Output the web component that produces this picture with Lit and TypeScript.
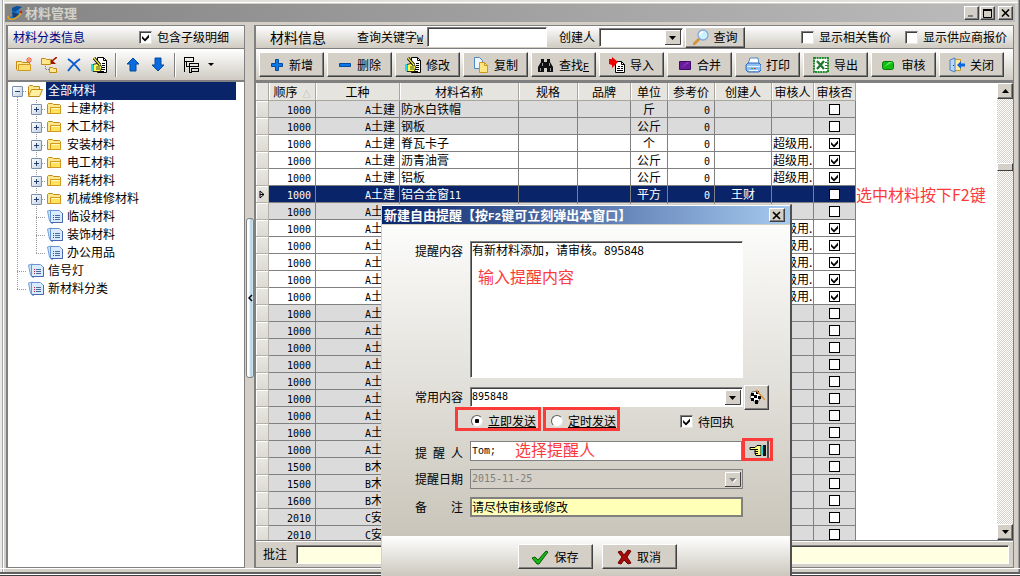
import { LitElement, html, css, svg, TemplateResult } from "lit";
import { customElement } from "lit/decorators.js";
import { classMap } from "lit/directives/class-map.js";

type Row = {
  order: string; trade: string; name: string; unit: string;
  price: string; creator: string; auditor: string; checked: boolean; state: "off" | "on" | "selected";
};

const pending = (order: string, trade: string, name = "", unit = ""): Row =>
  ({ order, trade, name, unit, price: "0", creator: "", auditor: "", checked: false, state: "off" });
const audited = (name = "", unit = ""): Row =>
  ({ order: "1000", trade: "A土建", name, unit, price: "0", creator: "", auditor: "超级用.", checked: true, state: "on" });

const ROWS: Row[] = [
  pending("1000", "A土建", "防水白铁帽", "斤"),
  pending("1000", "A土建", "钢板", "公斤"),
  audited("脊瓦卡子", "个"),
  audited("沥青油膏", "公斤"),
  audited("铝板", "公斤"),
  { order: "1000", trade: "A土建", name: "铝合金窗11", unit: "平方", price: "0", creator: "王财", auditor: "", checked: false, state: "selected" },
  pending("1000", "A土建"),
  ...Array.from({ length: 5 }, () => audited()),
  ...Array.from({ length: 9 }, () => pending("1000", "A土建")),
  pending("1500", "B木工"),
  pending("1500", "B木工"),
  pending("1600", "B木工"),
  pending("2010", "C安装"),
  pending("2010", "C安装"),
];

const FOLDERS = ["土建材料", "木工材料", "安装材料", "电工材料", "消耗材料", "机械维修材料"];
const DOCS = ["临设材料", "装饰材料", "办公用品"];
const ROOT_DOCS = ["信号灯", "新材料分类"];

const pic = (body: TemplateResult | unknown, w = 16, h = 16) =>
  html`<svg class="pic" width=${w} height=${h} viewBox="0 0 ${w} ${h}" aria-hidden="true">${body}</svg>`;

const ICON = {
  logo: pic(svg`<path d="M5 3 10 1l5 1-3 2 1 4-2 4-5 2-4-1 4-3-1-3z" fill="#1c7ed0"/><path d="M10 1l5 1-3 2-4 3-3-1 0-3z" fill="#0d4f9a"/><path d="M5 7l4 1 3 1-3 3-3 1z" fill="#1a3f74"/><path d="M1 11q0 4 5 3 5-1 8-6" fill="none" stroke="#e0a020" stroke-width="1.6"/><circle cx="14" cy="7" r="1.2" fill="#d02010"/>`),
  newFolder: pic(svg`<path d="M.500 4.500h5l1 1h7v8h-12l-1-1z" fill="#ffe88c" stroke="#c48a18"/><path d="M2.500 7.500h12v6h-12z" fill="#ffe070" stroke="#d29a22"/><path d="M13 0v6M10 3h6M11 1l4 4M15 1l-4 4" stroke="#f04020" stroke-width=".9"/><circle cx="13" cy="3" r="1.100" fill="#ffb060"/>`),
  moveFolder: pic(svg`<path d="M.500 1.500h4l1 1h4v5h-9z" fill="#ffe88c" stroke="#c48a18"/><path d="M8.500 10.500h3l1 1h3v4h-7z" fill="#ffe88c" stroke="#c48a18"/><path d="M16 0l-5 4" stroke="#a01000" stroke-width="1.600"/><path d="M10 2v5h5z" fill="#a01000"/><path d="M4.500 9v3.500H8" stroke="#777" stroke-dasharray="1 1" fill="none"/>`),
  cross: pic(svg`<path d="M2 2q6 4 12 12M14 2Q8 6 2 14" fill="none" stroke="#0a5bd0" stroke-width="1.900"/>`),
  edit: pic(svg`<path d="M6.500 .500h6l3 3v12h-9z" fill="#fff" stroke="#000"/><path d="M12.500 .500v3h3M10 12.500h4M8 14.500h5M11 6.500h3M11 8.500h3M11 10.500h3" fill="none" stroke="#000"/><path d="M2 7.500l4-1 4 2 .500 2-1 4H2z" fill="#ffff50" stroke="#000" stroke-width=".8"/><path d="M5 10h4M5 12h4" stroke="#000" stroke-width=".7"/><path d="M0 7h2v7H0z" fill="#20d8e8"/><path d="M3 1l6 7" stroke="#000" stroke-width="3"/><path d="M3 1l6 7" stroke="#f8e840" stroke-width="1.200"/>`),
  up: pic(svg`<path d="M8 1l6 6h-3v7H5V7H2z" fill="#0a6be0" stroke="#044a9c"/>`),
  down: pic(svg`<path d="M8 14l6-6h-3V1H5v7H2z" fill="#0a6be0" stroke="#044a9c"/>`),
  struct: pic(svg`<path d="M.500 .500h9v4h-9zM5.500 6.500h9v3h-9zM7.500 11.500h7v3h-7zM.500 4v11M2.500 4v5h3M5.500 9v6h2" fill="none" stroke="#000" shape-rendering="crispEdges"/>`),
  plus: pic(svg`<path d="M5.500 2.500h3v4h4v3h-4v4h-3v-4h-4v-3h4z" fill="#0a78e8" stroke="#06489c"/>`, 14, 16),
  minus: pic(svg`<path d="M1.500 6.500h11v3h-11z" fill="#0a78e8" stroke="#06489c"/>`, 14, 16),
  copy: pic(svg`<path d="M1.500 .500h5l3 3v8h-8z" fill="#eef6ff" stroke="#4f86c6"/><path d="M6.500 5.500h5l3 3v7h-8z" fill="#ffe680" stroke="#c99a20"/><path d="M11.500 5.500v3h3" fill="none" stroke="#c99a20"/>`),
  find: pic(svg`<path d="M3 2h3v3h3V2h3v3l3 5v5H9v-4H6v4H0v-5l3-5z" fill="#111"/><path d="M4.500 6v3M11.500 6v3M2.500 11v3M12.500 11v3" stroke="#999"/>`),
  import: pic(svg`<path d="M6.500 4.500h6l3 3v8h-9z" fill="#fff" stroke="#000"/><path d="M12.500 4.500v3h3" fill="none" stroke="#000"/><path d="M9 9.500h2M12 9.500h2M8 11.500h3M12 11.500h2M8 13.500h6" stroke="#000"/><path d="M0 2h3V0l6 5-6 6V8L0 7z" fill="#f00000"/>`),
  merge: pic(svg`<path d="M1.500 4.500h11v8h-11z" fill="#6a1b9a" stroke="#3d0b66"/><path d="M3 11l6-6h3z" fill="#8f3fc0"/>`, 14, 16),
  print: pic(svg`<path d="M5 1h8l1 6H3z" fill="#fff" stroke="#4f86c6"/><path d="M1 8l2-2h11l2 2v5l-2 2H3l-2-2z" fill="#8fc0f4" stroke="#2e68b8"/><path d="M2 9.500h13" stroke="#e6f3ff"/><path d="M6 11.500h2" stroke="#28b428"/><path d="M9 11.500h2" stroke="#e03030"/><path d="M4 13.500h9" stroke="#fff"/>`),
  excel: pic(svg`<rect x="1" y="1" width="14" height="14" fill="#fff" stroke="#1e8a2c" stroke-width="2" stroke-dasharray="2 .600"/><path d="M4 4l7 8M11 4l-7 8" stroke="#1e7a2c" stroke-width="2.300"/><path d="M12 5.500h2M12 8.500h2M12 11.500h2" stroke="#1e7a2c"/>`),
  audit: pic(svg`<rect x="1.500" y="4.500" width="11" height="8" rx="2" fill="#10c010" stroke="#087808"/><path d="M3 10l5-5h4z" fill="#60e860"/>`, 15, 16),
  exit: pic(svg`<path d="M5.500 2.500h6v11h-6z" fill="#ffe9a8" stroke="#c89a28"/><path d="M1 3l5-2v14l-5-2z" fill="#b8d8fa" stroke="#4a7ec0"/><path d="M4 8.500h1" stroke="#204080"/><path d="M8 8l4-4v2.500h4v3h-4V12z" fill="#0a66e0"/>`),
  lens: pic(svg`<path d="M1 15l6-6" stroke="#d8943a" stroke-width="3" stroke-linecap="round"/><circle cx="10" cy="6" r="5" fill="#c8f2fc" stroke="#86a8d8" stroke-width="1.300"/><path d="M7 6q0-3 3-3" fill="none" stroke="#fff" stroke-width="1.500"/>`),
  folder: pic(svg`<path d="M.500 12.500v-9l1-1h4l1 1h6l1 1v8z" fill="#ffe88c" stroke="#c48a18"/><path d="M3.500 6.500h10v6h-10z" fill="#ffe35c" stroke="#d29a22"/><path d="M4.500 7.500h8" stroke="#fff6c0"/>`),
  folderOpen: pic(svg`<path d="M.500 12.500v-9l1-1h3l1 1h6v3" fill="#ffe88c" stroke="#c48a18"/><path d="M.500 13.500l3-7h11l-3 7z" fill="#fff0a0" stroke="#c48a18"/>`),
  doc: pic(svg`<path d="M.500 2l4-1v11l1 3-3-3z" fill="#cfe4fb" stroke="#6f9fda"/><path d="M3.500 1.500h9l3 3v9h-12z" fill="#d9ebff" stroke="#6a94d8"/><path d="M15.500 4v9.500H4" fill="none" stroke="#4b67b0"/><path d="M6 6.500h1M6 8.500h1M6 10.500h1" stroke="#c02020"/><path d="M8 6.500h5M8 8.500h5M8 10.500h5" stroke="#4a6a9c"/>`),
  flag: pic(svg`<path d="M3 3l6-1 3 6-4 7-7-6z" fill="#fff" stroke="#000" stroke-width=".500"/><path d="M2 4h3v3H2zM7 2h3v3H7zM5 6h3v3H5zM9 7h3v3H9zM2 9h3v3H2zM6 11h3v4H6z" fill="#000"/><path d="M7 1l9 10" stroke="#d8943a" stroke-width="1.500"/>`),
  hand: pic(svg`<path d="M1 5.500h5l2-2h4v10H7l-1-2V7.500H1z" fill="#ffff80" stroke="#000"/><path d="M6 7.500h3M6 9.500h3M6 11.500h3" stroke="#000"/><path d="M12 4h2v9h-2z" fill="#20d0e0"/><path d="M14 3h3v11h-3z" fill="#111"/>`, 17, 16),
  save: pic(svg`<path d="M1 9l3-1 3 3 8-9 2 1L8 15H6z" fill="#18b418" stroke="#075c07"/>`, 18, 16),
  cancel: pic(svg`<path d="M1 3l3-1 3 4 4-5 3 1-4 6 4 6-3 1-4-4-3 4-3-1 4-6z" fill="#a80808" stroke="#6a0000"/>`, 15, 16),
};

/** Half-width characters get the narrow fixed-pitch face. */
const mix = (text: string) =>
  text.split(/([\x21-\x7e]+)/).map((p) => (/^[\x21-\x7e]/.test(p) ? html`<span class="half">${p}</span>` : p));

const TOOLS: [unknown, string, string][] = [
  [ICON.plus, "新增", ""], [ICON.minus, "删除", ""], [ICON.edit, "修改", ""], [ICON.copy, "复制", ""],
  [ICON.find, "查找", "F"], [ICON.import, "导入", ""], [ICON.merge, "合并", ""], [ICON.print, "打印", ""],
  [ICON.excel, "导出", ""], [ICON.audit, "审核", ""], [ICON.exit, "关闭", ""],
];

const shared = css`
  :host { box-sizing: border-box; font: 12px/16px "Noto Sans CJK SC", sans-serif; color: #000; }
  * { box-sizing: border-box; }
  button, input, select, textarea { font: inherit; color: inherit; margin: 0; border-radius: 0; }
  .pic { display: block; flex: none; }
  .half { font: 10px/0 "DejaVu Sans Mono", monospace; }
  .key { font: 10px/0 "Liberation Mono", monospace; text-decoration: underline; }
  .btn {
    display: flex; align-items: center; justify-content: center; gap: 5px; padding: 0; white-space: nowrap;
    background: #d4d0c8; border: 1px solid; border-color: #fff #404040 #404040 #fff;
    box-shadow: inset -1px -1px #808080;
  }
  .sunken { border: 1px solid; border-color: #808080 #fff #fff #808080; box-shadow: inset 1px 1px #404040; background: #fff; outline: 0; }
  .tick { display: flex; align-items: center; gap: 5px; white-space: nowrap; }
  .box {
    appearance: none; flex: none; width: 13px; height: 13px; background: #fff center / 9px 9px no-repeat;
    border: 1px solid; border-color: #808080 #e8e6e0 #e8e6e0 #808080; box-shadow: inset 1px 1px #404040;
  }
  .box:checked { background-image: url("data:image/svg+xml,%3Csvg xmlns='http://www.w3.org/2000/svg' viewBox='0 0 9 9'%3E%3Cpath d='M1 3l3 3 4-4.500v3L4 8.500 1 5.500z'/%3E%3C/svg%3E"); }
  .drop {
    appearance: none; padding: 0 18px 0 1px;
    background-image: url("data:image/svg+xml,%3Csvg xmlns='http://www.w3.org/2000/svg' width='16' height='15'%3E%3Cpath fill='%23d4d0c8' d='M0 0h16v15H0z'/%3E%3Cpath d='M.5 14V.5H15' fill='none' stroke='%23fff'/%3E%3Cpath d='M0 14.500h15.500V0' fill='none' stroke='%23404040'/%3E%3Cpath d='M4 6h7l-3.500 4z'/%3E%3C/svg%3E");
    background-repeat: no-repeat; background-position: right 1px center;
  }
`;

@customElement("reminder-dialog")
export class ReminderDialog extends LitElement {
  static styles = [shared, css`
    :host { display: block; background: #d4d0c8; border: 1px solid #d4d0c8; border-right: 2px solid #505050; box-shadow: inset 0 1px #fff; padding-top: 1px; }
    .title { display: flex; align-items: center; height: 19px; padding: 0 5px 0 2px; color: #fff; font-size: 13px; font-weight: 700; background: linear-gradient(90deg, #0a246a, #a6caf0); border-bottom: 1px solid #d4d0c8; }
    .title .half { font: 700 11px/0 "Liberation Mono", monospace; }
    .caption { flex: 1; white-space: nowrap; }
    .x { width: 16px; height: 14px; }
    .body { padding: 16px 17px 19px 33px; background: linear-gradient(#fcfcfb, #c9c5ba); }
    .line { display: flex; align-items: center; gap: 7px; height: 20px; margin-top: 8px; }
    .label { display: flex; justify-content: space-between; width: 48px; flex: none; }
    .field { width: 273px; height: 20px; padding: 0 1px; }
    .top { align-items: flex-start; height: 137px; margin: 0; }
    .top .label { padding-top: 2px; }
    .memo { width: 273px; height: 137px; resize: none; padding: 0 1px; line-height: 16px; display: block; }
    .common { height: 24px; margin-top: 7px; }
    .common .btn { width: 25px; height: 25px; margin-left: -6px; }
    .common .field { font: 10px/16px "DejaVu Sans Mono", monospace; }
    .modes { display: flex; align-items: center; gap: 2px; height: 24px; margin: -2px 0 0 40px; }
    .mode { display: flex; align-items: center; justify-content: flex-end; gap: 5px; height: 24px; padding: 4px 1px 0 0; border: 3px solid #fb3a3a; white-space: nowrap; text-decoration: underline; }
    .wide { width: 86px; padding-right: 2px; }
    .narrow { width: 77px; }
    .radio { appearance: none; width: 12px; height: 12px; margin: 0; border-radius: 50%; background: #fff; border: 1px solid; border-color: #606060 #e8e8e8 #e8e8e8 #606060; }
    .radio:checked { background: radial-gradient(circle, #000 2px, #fff 2.5px); }
    .modes .tick { margin: 5px 0 0 58px; }
    .people { height: 23px; margin-top: 7px; align-items: flex-end; }
    .people .field { width: 272px; border-color: #808080; box-shadow: none; font: 10px/16px "Liberation Mono", monospace; }
    .pick { width: 31px; height: 23px; margin-left: -7px; border: 3px solid #fb3a3a; box-shadow: inset -1px 0 #d4d0c8, inset -3px 0 #505050; }
    .date { background-color: #d4d0c8; color: #808080; border-color: #808080; box-shadow: none; opacity: 1; font: 10px/16px "DejaVu Sans Mono", monospace;
      background-image: url("data:image/svg+xml,%3Csvg xmlns='http://www.w3.org/2000/svg' width='16' height='15'%3E%3Cpath d='M.5 14V.5H15' fill='none' stroke='%23fff'/%3E%3Cpath d='M0 14.500h15.500V0' fill='none' stroke='%23404040'/%3E%3Cpath fill='%23fff' d='M5 7h7l-3.500 4z'/%3E%3Cpath fill='%23808080' d='M4 6h7l-3.500 4z'/%3E%3C/svg%3E"); }
    .remark { background: #ffffb8; border: 2px solid #808080; box-shadow: none; padding: 0 0 2px; }
    .foot { display: flex; justify-content: center; gap: 9px; height: 42px; padding: 8px 0 0 22px; background: linear-gradient(#fff, #c9c5ba); }
    .foot .btn { width: 75px; height: 25px; }
  `];

  render() {
    return html`
      <div class="title"><span class="caption">${mix("新建自由提醒【按F2键可立刻弹出本窗口】")}</span>
        <button class="btn x" aria-label="关闭"><svg width="10" height="9" viewBox="0 0 10 9"><path d="M1 1l7 7M8 1L1 8" stroke="#000" stroke-width="1.700"/></svg></button>
      </div>
      <div class="body">
        <div class="line top"><label class="label" for="memo">提醒内容</label><textarea id="memo" class="sunken memo" .value=${"有新材料添加，请审核。895848"}></textarea></div>
        <div class="line common"><label class="label" for="common">常用内容</label><select id="common" class="sunken field drop"><option>895848</option></select><button class="btn" aria-label="维护常用内容">${ICON.flag}</button></div>
        <div class="modes">
          <label class="mode wide"><input class="radio" type="radio" name="mode" checked>立即发送</label>
          <label class="mode narrow"><input class="radio" type="radio" name="mode">定时发送</label>
          <label class="tick"><input class="box" type="checkbox" checked>待回执</label>
        </div>
        <div class="line people"><label class="label" for="people"><span>提</span><span>醒</span><span>人</span></label><input id="people" class="sunken field" value="Tom;"><button class="btn pick" aria-label="选择提醒人">${ICON.hand}</button></div>
        <div class="line"><label class="label" for="date">提醒日期</label><select id="date" class="sunken field drop date" disabled><option>2015-11-25</option></select></div>
        <div class="line"><label class="label" for="remark"><span>备</span><span>注</span></label><input id="remark" class="sunken field remark" value="请尽快审核或修改"></div>
      </div>
      <div class="foot"><button class="btn">${ICON.save}保存</button><button class="btn">${ICON.cancel}取消</button></div>`;
  }
}

@customElement("category-tree")
export class CategoryTree extends LitElement {
  static styles = [shared, css`
    :host { display: block; padding: 0 8px 0 0; }
    .node { display: flex; align-items: center; height: 18px; white-space: nowrap; }
    .guide { position: relative; flex: none; width: 19px; height: 18px; display: flex; align-items: center; justify-content: center;
      --v: repeating-linear-gradient(#999 0 1px, transparent 1px 2px); --h: repeating-linear-gradient(90deg, #999 0 1px, transparent 1px 2px); }
    .through { background: var(--v) 9px 0 / 1px 100% no-repeat; }
    .branch { background: var(--v) 9px 0 / 1px 100% no-repeat, var(--h) 9px 9px / 10px 1px no-repeat; }
    .end { background: var(--v) 9px 0 / 1px 9px no-repeat, var(--h) 9px 9px / 10px 1px no-repeat; }
    .start { background: var(--v) 9px 9px / 1px 9px no-repeat, var(--h) 9px 9px / 10px 1px no-repeat; }
    .fold { width: 11px; height: 11px; padding: 0; border: 1px solid #7a8fae; border-radius: 1px; background: linear-gradient(135deg, #fff, #c4d0e2); display: flex; }
    .text { padding: 0 2px 2px; line-height: 16px; }
    .current { flex: 1; background: #0a246a; color: #fff; }
    .slot { width: 19px; flex: none; padding-left: 1px; }
  `];

  private fold(open: boolean) {
    return html`<button class="fold" aria-label=${open ? "折叠" : "展开"}><svg width="9" height="9" viewBox="0 0 9 9"><path d=${open ? "M2 4.500h5" : "M2 4.500h5M4.500 2v5"} stroke="#24406c"/></svg></button>`;
  }

  render() {
    return html`
      <div class="node"><span class="guide start">${this.fold(true)}</span><span class="slot">${ICON.folderOpen}</span><span class="text current">全部材料</span></div>
      ${FOLDERS.map((t) => html`<div class="node"><span class="guide through"></span><span class="guide branch">${this.fold(false)}</span><span class="slot">${ICON.folder}</span><span class="text">${t}</span></div>`)}
      ${DOCS.map((t, i) => html`<div class="node"><span class="guide through"></span><span class=${classMap({ guide: true, branch: i < DOCS.length - 1, end: i === DOCS.length - 1 })}></span><span class="slot">${ICON.doc}</span><span class="text">${t}</span></div>`)}
      ${ROOT_DOCS.map((t, i) => html`<div class="node"><span class=${classMap({ guide: true, branch: i === 0, end: i === 1 })}></span><span class="slot">${ICON.doc}</span><span class="text">${t}</span></div>`)}`;
  }
}

@customElement("material-grid")
export class MaterialGrid extends LitElement {
  static styles = [shared, css`
    :host { display: flex; align-items: flex-start; overflow: hidden; background: #fff; }
    .rows { border-collapse: separate; border-spacing: 0; table-layout: fixed; width: 600px; flex: none; }
    .c13 { width: 13px; } .c47 { width: 47px; } .c84 { width: 84px; } .c119 { width: 119px; } .c59 { width: 59px; }
    .c53 { width: 53px; } .c37 { width: 37px; } .c57 { width: 57px; } .c42 { width: 42px; }
    th { height: 18px; padding: 0; font-weight: 400; line-height: 17px; white-space: nowrap; background: #e6e4de; border-bottom: 1px solid #a8a69f; border-right: 1px solid #a8a69f; box-shadow: inset 1px 0 #fff; }
    td { height: 17px; padding: 0; line-height: 16px; white-space: nowrap; overflow: hidden; border: solid #808080; border-width: 0 1px 1px 0; background: #dbdbdb; }
    .on td { background: #fff; }
    .selected td { background: #0a246a; color: #fff; }
    .rows .mark { background: linear-gradient(#e9e7e2, #dddad3); border-color: #b4b1a9; box-shadow: inset 1px 1px #fff; color: #000; }
    .mark svg { display: block; margin: auto; }
    .right { text-align: right; padding-right: 4px; }
    .mid { text-align: center; }
    .name, .auditor { padding-left: 1px; }
    .flag { appearance: none; display: block; width: 11px; height: 11px; margin: 0 auto; border: 1px solid #000; background: #fff center / 9px 9px no-repeat; }
    .flag:checked { background-image: url("data:image/svg+xml,%3Csvg xmlns='http://www.w3.org/2000/svg' viewBox='0 0 9 9'%3E%3Cpath d='M1 3l3 3 4-4.500v3L4 8.500 1 5.500z'/%3E%3C/svg%3E"); }
    .sort { color: #aaa; font-size: 8px; line-height: 0; padding-left: 5px; }
    .bar { margin-left: auto; width: 16px; align-self: stretch; display: flex; flex-direction: column; background: repeating-conic-gradient(#d4d0c8 0 25%, #fff 0 50%) 0 0 / 2px 2px; }
    .bar .btn { width: 16px; height: 16px; flex: none; }
    .track { flex: 1; padding-top: 64px; }
    .thumb { height: 8px; background: #d4d0c8; border: 1px solid; border-color: #fff #404040 #404040 #fff; }
  `];

  render() {
    return html`
      <table class="rows">
        <colgroup>${[13, 47, 84, 119, 59, 53, 37, 47, 57, 42, 42].map((w) => html`<col class="c${w}">`)}</colgroup>
        <thead><tr><th></th><th>顺序<span class="sort">△</span></th>${["工种", "材料名称", "规格", "品牌", "单位", "参考价", "创建人", "审核人", "审核否"].map((t) => html`<th>${t}</th>`)}</tr></thead>
        <tbody>${ROWS.map((r) => html`
          <tr class=${r.state}>
            <td class="mark">${r.state === "selected" ? html`<svg width="7" height="9" viewBox="0 0 7 9"><path d="M1 1l4 3.500L1 8zM1 4.500h4" fill="none" stroke="#000"/></svg>` : ""}</td>
            <td class="right">${mix(r.order)}</td><td class="right">${mix(r.trade)}</td><td class="name">${mix(r.name)}</td>
            <td></td><td></td><td class="mid">${r.unit}</td><td class="right">${mix(r.price)}</td>
            <td class="mid">${r.creator}</td><td class="auditor">${r.auditor}</td>
            <td><input class="flag" type="checkbox" aria-label="审核否" .checked=${r.checked}></td>
          </tr>`)}</tbody>
      </table>
      <div class="bar">
        <button class="btn" aria-label="向上"><svg width="7" height="4"><path d="M0 4L3.500 0 7 4z"/></svg></button>
        <div class="track"><div class="thumb"></div></div>
        <button class="btn" aria-label="向下"><svg width="7" height="4"><path d="M0 0h7L3.500 4z"/></svg></button>
      </div>`;
  }
}

@customElement("app-root")
export class AppRoot extends LitElement {
  static styles = [shared, css`
    :host { display: flex; flex-direction: column; position: relative; height: 100vh; overflow: hidden; padding: 4px 5px 0; background: #d4d0c8; box-shadow: inset 2px 0 #e6eaea, inset 3px 0 #a8a8a8, inset 4px 0 #fff, inset -1px 0 #606060, inset -2px 0 #a0a0a0, inset 0 2px #e2e0da, inset 0 3px #fff; }
    .title { display: flex; align-items: center; height: 18px; padding: 0 2px; gap: 2px; background: linear-gradient(90deg, #858585, #bcbcbc); color: #d4d0c8; flex: none; }
    .caption { flex: 1; font-size: 13px; font-weight: 700; }
    .win { width: 15px; height: 14px; }
    .win + .win { margin-left: -1px; }
    .win:last-child { margin-left: 1px; }
    .work { display: flex; flex: 1; min-height: 0; padding: 3px 1px 0; }
    .side { display: flex; flex-direction: column; width: 239px; flex: none; border: 1px solid #808080; border-left-width: 2px; background: #fff; }
    .head { display: flex; align-items: center; height: 22px; flex: none; background: linear-gradient(#fefefe, #cfcbc2); }
    .side .head { justify-content: space-between; padding: 0 15px 0 5px; }
    .navy { color: #000080; }
    .tools { display: flex; align-items: center; height: 34px; flex: none; background: linear-gradient(#fff, #cfcbc2); border-top: 1px solid #808080; border-bottom: 2px solid #808080; }
    .side .tools { gap: 9px; padding-left: 8px; }
    .tool { border: 0; padding: 0; background: none; display: flex; align-items: center; gap: 8px; }
    .rule { width: 2px; height: 24px; margin: 0 -1px; border-left: 1px solid #808080; border-right: 1px solid #fff; }
    .split { width: 9px; flex: none; padding: 193px 1px 0; }
    .grip { display: flex; align-items: center; justify-content: center; height: 160px; width: 8px; border: 1px solid #808080; border-radius: 3px; background: linear-gradient(90deg, #fff 2px, #a9cfe4 4px, #d8ecf6); }
    .main { flex: 1; min-width: 0; display: flex; flex-direction: column; border: 1px solid #808080; border-left-width: 2px; }
    .main .head { padding-left: 14px; }
    .big { font-size: 14px; width: 87px; }
    .query { width: 120px; height: 20px; margin: 0 12px 0 4px; }
    .who { width: 84px; height: 19px; margin: 0 2px 0 4px; }
    .head .btn { width: 60px; height: 21px; }
    .opts { margin-left: auto; display: flex; gap: 14px; padding-right: 6px; }
    .main .tools { gap: 3px; padding-left: 3px; border-bottom-width: 3px; height: 35px; }
    .main .tools .btn { width: 65px; height: 25px; }
    .grid { flex: 1; min-height: 0; }
    .note { display: flex; align-items: center; gap: 9px; height: 27px; flex: none; padding: 0 4px 0 7px; border-top: 1px solid #808080; box-shadow: inset 0 1px #fff; }
    .note .sunken { flex: 1; min-width: 0; height: 19px; background: #ffffe1; }
    .base { height: 8px; flex: none; border-bottom: 1px solid #404040; border-top: 1px solid #fff; box-shadow: inset 0 -1px #fff, inset 0 -3px #606060; margin: 0 -5px; }
    .dialog { position: absolute; left: 381px; top: 204px; width: 411px; }
    .hint { position: absolute; color: #fb3a3a; font-size: 16px; line-height: 20px; white-space: nowrap; pointer-events: none; }
    .pickrow { left: 856px; top: 184px; }
    .typein { left: 478px; top: 266px; }
    .choose { left: 515px; top: 439px; }
  `];

  render() {
    return html`
      <div class="title">${ICON.logo}<span class="caption">材料管理</span>
        <button class="btn win" aria-label="最小化"><svg width="9" height="8"><path d="M1 7h5" stroke="#808080" stroke-width="2"/></svg></button>
        <button class="btn win" aria-label="最大化"><svg width="9" height="9"><path d="M.500 1h8v7.500h-8V0" fill="none" stroke="#000"/><path d="M0 1h9" stroke="#000" stroke-width="2"/></svg></button>
        <button class="btn win" aria-label="关闭"><svg width="9" height="8"><path d="M1 .500l7 7M8 .500l-7 7" stroke="#000" stroke-width="1.600"/></svg></button>
      </div>
      <div class="work">
        <section class="side">
          <div class="head"><span class="navy">材料分类信息</span><label class="tick"><input class="box" type="checkbox" checked>包含子级明细</label></div>
          <div class="tools">
            ${([[ICON.newFolder, "新建"], [ICON.moveFolder, "移动"], [ICON.cross, "删除"], [ICON.edit, "修改"]] as [unknown, string][]).map(([i, t]) => html`<button class="tool" aria-label=${t}>${i}</button>`)}
            <span class="rule"></span>
            <button class="tool" aria-label="上移">${ICON.up}</button><button class="tool" aria-label="下移">${ICON.down}</button>
            <span class="rule"></span>
            <button class="tool" aria-label="层级">${ICON.struct}<svg width="6" height="3"><path d="M0 0h6L3 3z"/></svg></button>
          </div>
          <category-tree></category-tree>
        </section>
        <div class="split"><div class="grip"><svg width="5" height="8" viewBox="0 0 5 8"><path d="M4 1L1 4l3 3" fill="none" stroke="#000" stroke-width="1.500"/></svg></div></div>
        <section class="main">
          <div class="head">
            <span class="big">材料信息</span>
            <label for="query">查询关键字<span class="key">W</span></label><input id="query" class="sunken query">
            <label for="who">创建人</label><select id="who" class="sunken who drop"><option></option></select>
            <button class="btn">${ICON.lens}查询</button>
            <div class="opts"><label class="tick"><input class="box" type="checkbox">显示相关售价</label><label class="tick"><input class="box" type="checkbox">显示供应商报价</label></div>
          </div>
          <div class="tools">${TOOLS.map(([icon, text, key]) => html`<button class="btn">${icon}<span>${text}${key ? html`<span class="key">${key}</span>` : ""}</span></button>`)}</div>
          <material-grid class="grid"></material-grid>
          <div class="note"><label for="note">批注</label><input id="note" class="sunken"></div>
        </section>
      </div>
      <div class="base"></div>
      <span class="hint pickrow">选中材料按下F2键</span>
      <reminder-dialog class="dialog"></reminder-dialog>
      <span class="hint typein">输入提醒内容</span>
      <span class="hint choose">选择提醒人</span>`;
  }
}
